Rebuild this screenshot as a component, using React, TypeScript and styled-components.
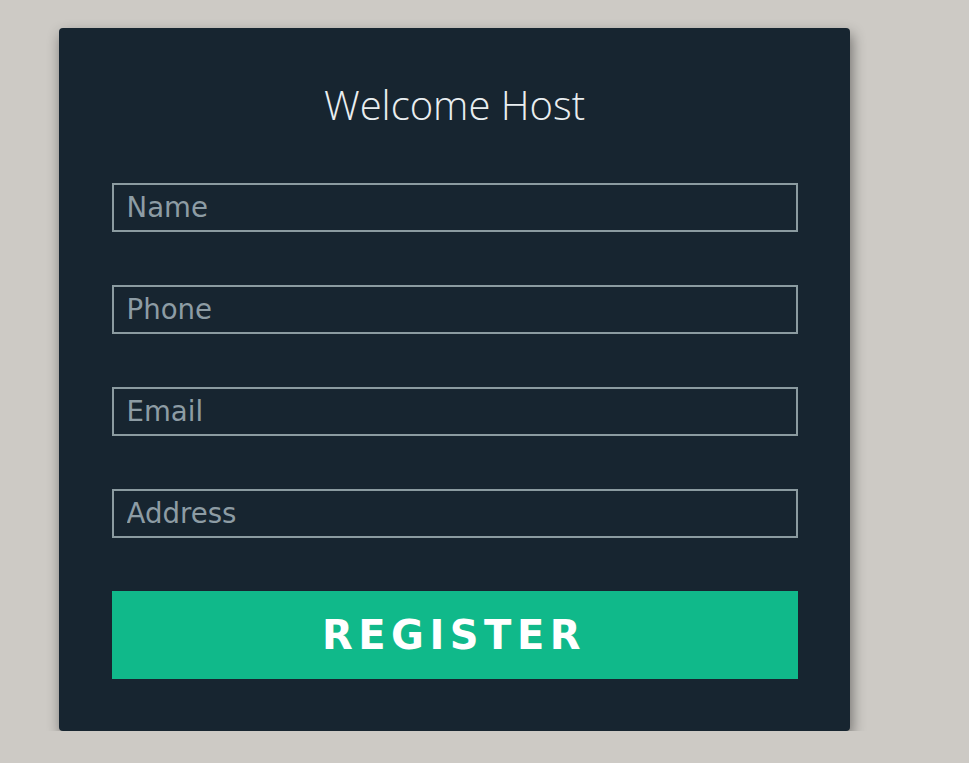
import React, { useState } from 'react'
import styled, { createGlobalStyle } from 'styled-components'

const GlobalStyle = createGlobalStyle`
body {
  margin: 0;
  background-color: #cdcac5;
  font-family: "DejaVu Sans", sans-serif;
}
`

const App = () => {
    const [form, setForm] = useState({ name: '', phone: '', email: '', address: '' })

    const onChange = (e: React.ChangeEvent<HTMLInputElement>) => {
        setForm({ ...form, [e.target.name]: e.target.value })
    }

    const onHandleSubmit = (e: React.FormEvent) => {
        e.preventDefault()
    }

    return (
        <div>
            <GlobalStyle />
            <Container>
                <Card onSubmit={onHandleSubmit}>
                    <Title>Welcome Host</Title>
                    <Input name="name" placeholder="Name" value={form.name} onChange={onChange} />
                    <Input name="phone" placeholder="Phone" value={form.phone} onChange={onChange} />
                    <Input name="email" placeholder="Email" value={form.email} onChange={onChange} />
                    <Input name="address" placeholder="Address" value={form.address} onChange={onChange} />
                    <Button type="submit">REGISTER</Button>
                </Card>
            </Container>
        </div>
    )
}

export default App

const Container = styled.div`
padding: 28px 0 0 59px;
`

const Card = styled.form`
box-sizing: border-box;
width: 791px;
height: 703px;
background-color: #172530;
border-radius: 4px;
box-shadow: 2px 6px 14px rgba(0, 0, 0, 0.45);
display: flex;
flex-direction: column;
align-items: center;
padding: 52px 52px 0;
gap: 53px;
`

const Title = styled.div`
font-family: "Open Sans", sans-serif;
font-weight: 300;
font-size: 40px;
line-height: 50px;
color: #e9eef0;
`

const Input = styled.input`
box-sizing: border-box;
width: 686px;
height: 49px;
flex-shrink: 0;
background-color: transparent;
border: 2px solid #8b9ba0;
outline: none;
padding: 0 13px;
font-family: "DejaVu Sans", sans-serif;
font-size: 27.6px;
color: #dfe6e9;

&::placeholder {
  color: #8d9ca4;
}
`

const Button = styled.button`
width: 686px;
height: 88px;
flex-shrink: 0;
background-color: #10b98a;
border: 0;
outline: none;
color: white;
font-family: "DejaVu Sans", sans-serif;
font-weight: bold;
font-size: 40px;
letter-spacing: 5.5px;
padding-left: 5px;
cursor: pointer;
`
